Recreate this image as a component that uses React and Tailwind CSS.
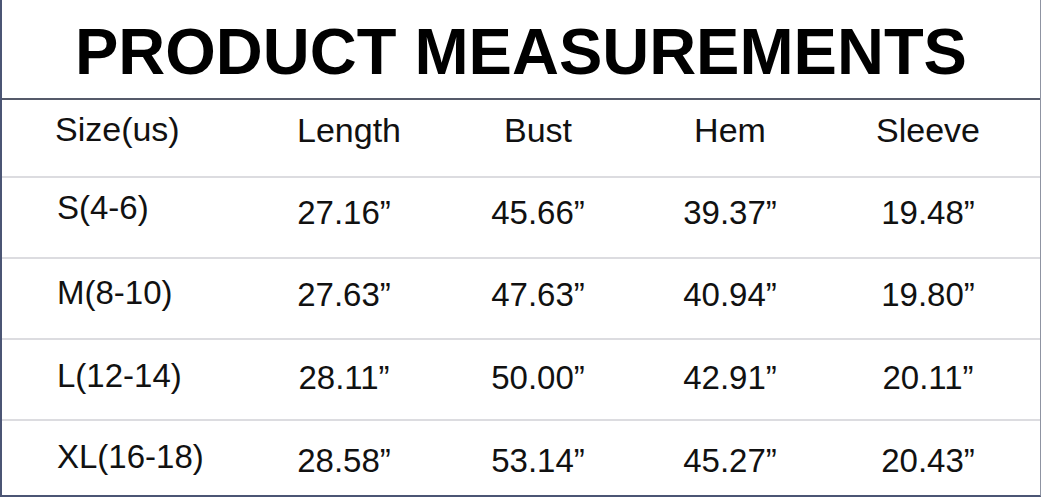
const headers = ["Length", "Bust", "Hem", "Sleeve"];

const rows = [
  { size: "S(4-6)", vals: ["27.16”", "45.66”", "39.37”", "19.48”"], h: "h-[81px] border-b-2", a: "pt-[13px]", b: "pt-[18px]" },
  { size: "M(8-10)", vals: ["27.63”", "47.63”", "40.94”", "19.80”"], h: "h-[81px] border-b-2", a: "pt-[17px]", b: "pt-[19px]" },
  { size: "L(12-14)", vals: ["28.11”", "50.00”", "42.91”", "20.11”"], h: "h-[81px] border-b-2", a: "pt-[19px]", b: "pt-[21px]" },
  { size: "XL(16-18)", vals: ["28.58”", "53.14”", "45.27”", "20.43”"], h: "h-[68px]", a: "pt-[19px]", b: "pt-[23px]" },
];

const cols = "grid grid-cols-[250px_194px_184px_200px_196px]";

export default function App() {
  return (
    <div className="w-[1042px] h-[497px] bg-white font-['Liberation_Sans',Arial,sans-serif] text-[#111]">
      <div className="w-[1041px] h-[497px] border-l-2 border-b-2 border-r border-[#4b5574] border-r-[#8f94a2] flex flex-col">
        <div className="h-[100px] border-b-2 border-[#555a6a] flex justify-center pt-[19px]">
          <h1 className="text-[65px] font-bold leading-none text-black">PRODUCT MEASUREMENTS</h1>
        </div>

        <div className={`${cols} h-[78px] border-b-2 border-[#dcdce0] text-[34px] leading-none`}>
          <div className="pl-[53px] pt-[12px]">Size(us)</div>
          {headers.map((h) => (
            <div key={h} className="text-center pt-[13px]">{h}</div>
          ))}
        </div>

        {rows.map((r) => (
          <div key={r.size} className={`${cols} ${r.h} border-[#dcdce0] leading-none`}>
            <div className={`pl-[55px] text-[33px] ${r.a}`}>{r.size}</div>
            {r.vals.map((v, i) => (
              <div key={i} className={`text-center text-[33px] ${i === 0 ? "pr-[10px]" : ""} ${r.b}`}>{v}</div>
            ))}
          </div>
        ))}
      </div>
    </div>
  );
}
